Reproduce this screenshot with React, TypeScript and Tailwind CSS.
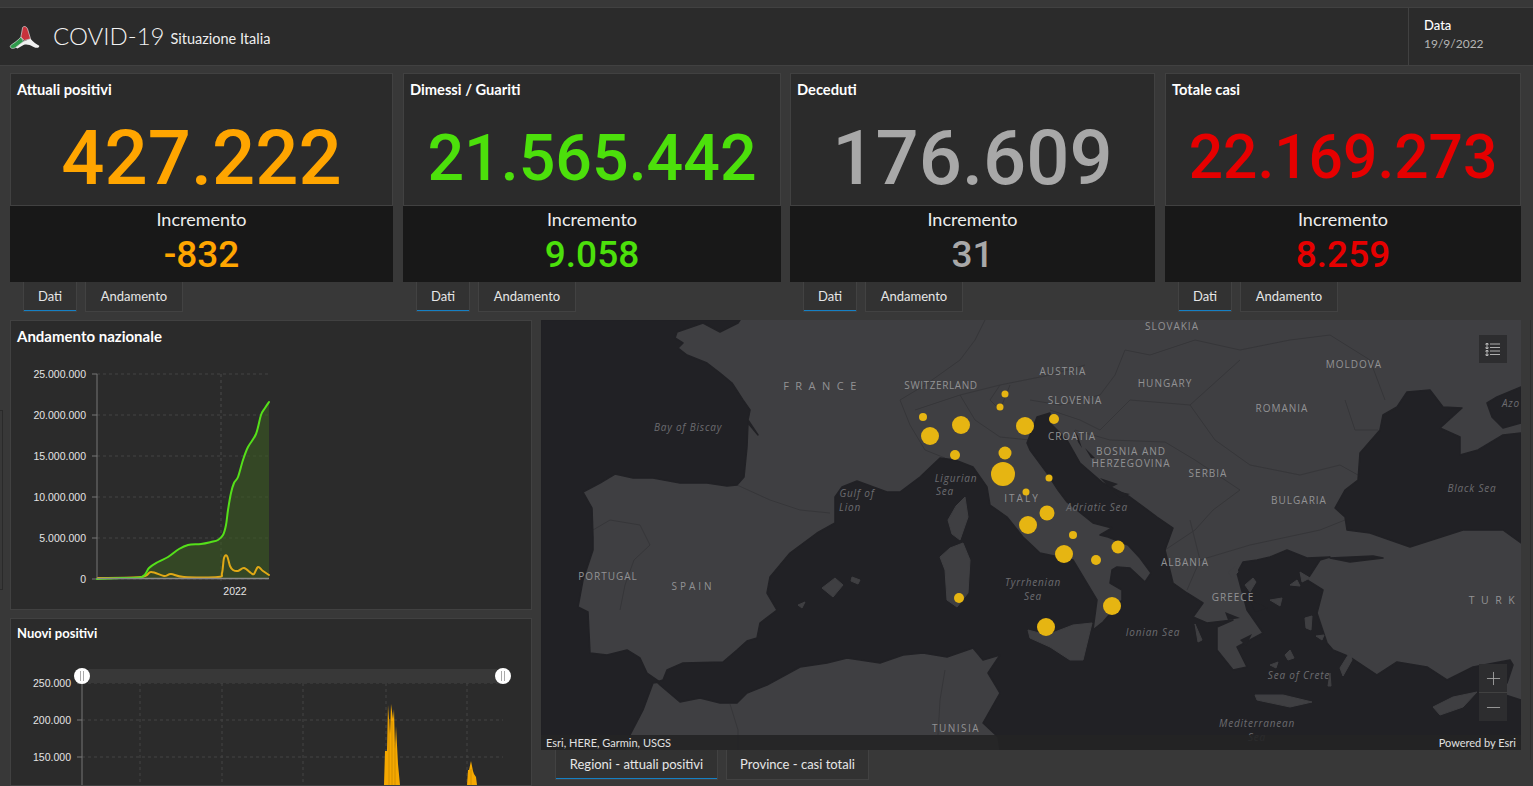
const sea = "541,320 740,320 738,323 720,332 703,323 677,332 675,338 683,343 678,348 687,355 707,363 720,373 732,383 743,400 750,410 748,420 758,435 748,423 747,447 744,477 737,485 727,486 707,483 680,483 653,478 633,478 615,474 600,483 583,492 592,508 593,537 593,550 583,580 578,607 588,612 590,653 607,655 627,650 640,658 647,673 660,682 653,683 643,710 630,735 625,750 541,750";

const med = "657,682 663,680 667,670 683,663 723,662 737,650 747,641 757,638 760,623 777,610 767,593 770,577 790,553 817,533 835,523 835,497 842,487 857,481 887,492 900,492 920,477 940,458 955,460 973,467 987,487 990,505 1007,517 1023,537 1040,553 1073,560 1085,580 1097,600 1093,630 1103,622 1122,600 1122,590 1110,583 1112,570 1117,567 1130,568 1145,582 1151,573 1140,558 1128,545 1108,537 1100,535 1112,528 1093,523 1067,502 1058,490 1047,473 1030,450 1027,443 1037,417 1050,413 1050,423 1067,440 1080,463 1103,483 1130,497 1157,517 1173,528 1165,550 1173,583 1187,593 1203,603 1193,617 1207,623 1233,620 1217,627 1217,650 1233,670 1247,667 1237,647 1263,633 1247,610 1237,573 1243,562 1257,560 1270,557 1287,550 1307,558 1330,557 1320,560 1307,580 1323,590 1317,613 1327,643 1333,650 1350,657 1377,675 1397,662 1427,667 1447,680 1473,667 1510,660 1513,665 1507,683 1490,690 1521,700 1521,750 1000,750 998,737 983,723 1000,693 988,673 1000,655 983,660 973,648 947,657 923,653 903,655 880,663 847,658 827,663 800,667 767,685 747,693 737,703 720,703 700,698 680,702 660,685";

const black = "1397,407 1407,392 1430,390 1443,407 1462,408 1440,428 1460,437 1460,455 1478,450 1503,435 1521,433 1521,543 1503,530 1463,530 1410,547 1370,533 1347,530 1345,517 1335,508 1345,490 1358,480 1360,453 1380,430 1383,415";

const islands = [
  "948,520 956,506 965,497 968,517 960,540 952,534",
  "940,557 950,548 963,543 970,560 968,593 957,607 947,600 945,570",
  "1028,630 1047,635 1073,625 1092,623 1083,660 1070,660 1050,647 1030,638",
  "822,588 835,578 843,585 833,597",
  "852,577 860,580 858,584 851,581",
  "798,605 805,602 802,608",
  "1255,695 1283,695 1312,702 1290,707 1257,700",
  "1433,707 1453,697 1477,692 1463,707 1440,715",
  "1340,668 1350,652 1352,660 1343,676",
  "1328,686 1330,673 1331,686",
  "1300,572 1310,578 1302,582",
  "1290,585 1297,580 1300,586",
  "1270,600 1282,598 1280,606",
  "1305,618 1312,616 1311,630 1306,628",
  "1316,636 1324,635 1322,640",
  "1285,655 1290,650 1294,658 1288,660",
  "1270,665 1278,662 1276,668",
  "1228,572 1236,566 1238,572 1232,578",
  "1195,624 1202,640 1198,642",
  "1245,585 1253,578 1256,582 1250,592",
];

const inlets = [
  "1074,430 1078,436 1082,448 1078,442",
  "1085,448 1095,458 1091,458",
  "1100,478 1118,484 1110,488",
  "1112,490 1130,494 1120,498",
  "1240,640 1252,634 1246,646",
  "1225,612 1240,618 1228,620",
  "1250,600 1268,608 1255,612",
];

const peninsula = [
  "1487,403 1497,397 1521,387 1521,423 1503,428 1492,417",
  "1330,558 1373,556 1383,558 1350,562",
];

const borders = [
  "M593 530 L610 520 L640 525 L650 545 L634 560 L625 585 L620 610",
  "M737 485 L770 500 L800 510 L830 513",
  "M730 704 L738 730 L738 750",
  "M945 670 L940 700 L938 735",
  "M900 400 L925 385 L960 360 L975 340 L985 320",
  "M900 400 L910 425 L925 450 L945 458",
  "M915 410 L960 395 L1000 385 L1050 375 L1085 365",
  "M960 395 L975 420 L1000 437 L1030 440",
  "M1000 385 L990 400 L1000 410 L1010 385",
  "M1030 400 L1060 405 L1100 395 L1115 375 L1125 350",
  "M1125 350 L1150 355 L1195 340 L1240 350 L1290 340 L1330 335 L1370 360 L1385 400",
  "M1050 410 L1080 420 L1100 430 L1130 400 L1190 405 L1240 360",
  "M1190 405 L1215 440 L1250 465 L1300 475 L1340 465 L1358 475",
  "M1075 430 L1110 440 L1165 442 L1195 460 L1240 490 L1213 510 L1195 530",
  "M1190 520 L1200 560 L1250 545 L1320 530 L1345 520",
  "M1195 530 L1165 550 M1200 560 L1187 590",
  "M1345 400 L1355 430 L1378 430",
];

const dots: [number, number, number][] = [
  [923, 417, 4], [930, 436, 9], [961, 425, 9], [955, 455, 5], [1000, 407, 3.5], [1005, 394, 3.5], [1025, 426, 9],
  [1054, 419, 5], [1005, 453, 6.5], [1003, 474, 12], [1026, 492, 3.5], [1049, 478, 3.5], [1047, 513, 7.5],
  [1028, 525, 9], [1073, 535, 4], [1064, 554, 9], [1118, 547, 6.5], [1096, 560, 5], [1112, 606, 9], [1046, 627, 9], [959, 598, 5],
];

const places: [string, number, number, number, number][] = [
  ["FRANCE", 823, 390, 6.5, 11], ["SWITZERLAND", 941, 389, 0.6, 10], ["AUSTRIA", 1063, 375, 1, 10], ["SLOVAKIA", 1172, 330, 1, 10],
  ["HUNGARY", 1165, 387, 1, 10], ["MOLDOVA", 1354, 368, 1, 10], ["ROMANIA", 1282, 412, 1, 10], ["SLOVENIA", 1075, 404, 1, 10],
  ["CROATIA", 1072, 440, 1, 10], ["BOSNIA AND", 1131, 455, 1, 10], ["HERZEGOVINA", 1131, 467, 1, 10], ["SERBIA", 1208, 477, 1, 10],
  ["BULGARIA", 1299, 504, 1, 10], ["ITALY", 1022, 502, 2, 10], ["PORTUGAL", 608, 580, 1, 10], ["SPAIN", 693, 590, 3, 10],
  ["ALBANIA", 1185, 566, 1, 10], ["GREECE", 1233, 601, 1, 10], ["TURK", 1495, 604, 6.5, 10.5], ["TUNISIA", 956, 732, 1.5, 10],
];

const seaNames: [string, number, number][] = [
  ["Bay of Biscay", 688, 431], ["Gulf of", 857, 497], ["Lion", 850, 511], ["Ligurian", 956, 482], ["Sea", 945, 495],
  ["Adriatic Sea", 1097, 511], ["Tyrrhenian", 1033, 586], ["Sea", 1033, 600], ["Ionian Sea", 1153, 636],
  ["Sea of Crete", 1299, 679], ["Mediterranean", 1257, 727], ["Sea", 1257, 741], ["Black Sea", 1472, 492], ["Azo", 1511, 407],
];

const yLabels: [string, number][] = [
  ["25.000.000", 374], ["20.000.000", 415], ["15.000.000", 456], ["10.000.000", 497], ["5.000.000", 538], ["0", 579],
];

const greenLine: [number, number][] = [
  [96, 579], [120, 578], [141, 577], [148, 568], [157, 562], [167, 557], [178, 549], [187, 545], [200, 544], [210, 542], [217, 540], [222, 535],
  [225, 525], [227, 510], [230, 493], [233, 483], [237, 477], [242, 460], [247, 447], [255, 434], [260, 415], [264, 408], [268, 402],
];

const orangeLine: [number, number][] = [
  [97, 578], [140, 577], [150, 572], [163, 576], [170, 574], [183, 577], [217, 577], [221, 573], [223, 558], [226, 556], [229, 566],
  [232, 570], [237, 571], [243, 568], [250, 573], [253, 574], [257, 567], [262, 571], [268, 575],
];

const spikesA = "383,786 384,752 386,752 387,706 389,735 390,705 392,720 393,710 394,750 395,727 397,765 399,786";
const spikesB = "466,786 467,771 468,771 470,762 472,772 473,775 475,778 476,786";

// catmull-rom, so the trend lines don't look like polygons
const smooth = (pts: [number, number][]) => {
  let d = `M${pts[0][0]} ${pts[0][1]}`;
  for (let i = 0; i < pts.length - 1; i++) {
    const p0 = pts[Math.max(i - 1, 0)];
    const p1 = pts[i];
    const p2 = pts[i + 1];
    const p3 = pts[Math.min(i + 2, pts.length - 1)];
    const c1x = p1[0] + (p2[0] - p0[0]) / 6;
    const c1y = p1[1] + (p2[1] - p0[1]) / 6;
    const c2x = p2[0] - (p3[0] - p1[0]) / 6;
    const c2y = p2[1] - (p3[1] - p1[1]) / 6;
    d += ` C${c1x} ${c1y} ${c2x} ${c2y} ${p2[0]} ${p2[1]}`;
  }
  return d;
};

const Logo = () => (
  <svg viewBox="0 0 40 36" className="ml-[6px] h-[32px] w-[35px]">
    <path d="M19 7 C21 5 24 6 25 10 L28 20 L21 22 L17 18 Z" fill="#c8323c" stroke="#ddd" strokeWidth="0.8" />
    <path d="M17 18 L20 23 L11 30 C8 32 4 31 5 28 C7 26 13 23 17 18 Z" fill="#2f9a4b" stroke="#ddd" strokeWidth="0.8" />
    <path d="M20 23 L28 20 C31 24 35 26 38 28 C38 31 35 31 31 29 C27 27 24 26 20 27 L13 31 L11 30 Z" fill="#f1f1f1" />
  </svg>
);

const TabBar = ({ tabs, wide }: { tabs: string[]; wide?: boolean }) => (
  <div className={`flex h-[30px] gap-2 ${wide ? "ml-[14px]" : "ml-[13px]"}`}>
    {tabs.map((t, i) => (
      <div
        key={t}
        className={`flex h-full items-center justify-center border border-t-0 border-[#424242] bg-[#323232] text-[13px] text-[#e6e6e6] ${
          i === 0 ? "shadow-[inset_0_-1px_0_#1580c4]" : ""
        } ${wide ? (i === 0 ? "w-[163px]" : "w-[143px]") : i === 0 ? "w-[54px]" : "w-[98px]"}`}
      >
        {t}
      </div>
    ))}
  </div>
);

interface StatCardProps {
  title: string;
  value: string;
  delta: string;
  color: string;
  width: string;
  size: string;
}

const StatCard = ({ title, value, delta, color, width, size }: StatCardProps) => (
  <div className={width}>
    <div className="h-[133px] border border-[#414141] bg-[#2b2b2b]">
      <div className="px-[6px] pt-[6px] text-[14.7px] font-bold leading-[18px] text-white">{title}</div>
      <div className={`mt-[12px] text-center font-[Roboto,sans-serif] font-medium leading-[96px] ${size} ${color}`}>{value}</div>
    </div>
    <div className="h-[76px] bg-[#181818] text-center">
      <div className="pt-[3px] text-[18px] leading-[21px] text-[#eeeeee]">Incremento</div>
      <div className={`pt-[3px] font-[Roboto,sans-serif] text-[37px] font-medium leading-[44px] ${color}`}>{delta}</div>
    </div>
    <TabBar tabs={["Dati", "Andamento"]} />
  </div>
);

const NationalChart = () => (
  <svg viewBox="10 345 522 258" className="block h-[258px] w-[522px]">
    {yLabels.map(([label, y]) => (
      <g key={label}>
        <line x1="96" x2="268" y1={y} y2={y} stroke="#444" strokeDasharray="3 3" />
        <line x1="91" x2="96" y1={y} y2={y} stroke="#777" />
        <text x="85" y={y + 4} textAnchor="end" fontSize="10.5" fill="#e4e4e4" fontFamily="Liberation Sans, sans-serif">
          {label}
        </text>
      </g>
    ))}
    <line x1="220" x2="220" y1="374" y2="584" stroke="#4a4a4a" strokeDasharray="3 3" />
    <line x1="96" x2="96" y1="374" y2="579" stroke="#777" />
    <path d={`${smooth(greenLine)} L268 579 L96 579 Z`} fill="#3a5a22" fillOpacity="0.6" />
    <path d={smooth(orangeLine)} fill="none" stroke="#e0a916" strokeWidth="2" strokeLinecap="round" />
    <path d={smooth(greenLine)} fill="none" stroke="#55e01a" strokeWidth="2" strokeLinecap="round" />
    <line x1="96" x2="268" y1="578.5" y2="578.5" stroke="#888" strokeWidth="1.5" />
    <text x="234" y="595" textAnchor="middle" fontSize="10.5" fill="#e4e4e4" fontFamily="Liberation Sans, sans-serif">
      2022
    </text>
  </svg>
);

const NewCasesChart = () => (
  <svg viewBox="10 643 522 143" className="block h-[143px] w-[522px]">
    {[139, 221, 302, 385, 466].map((x) => (
      <line key={x} x1={x} x2={x} y1="684" y2="786" stroke="#444" strokeDasharray="3 3" />
    ))}
    {(
      [
        ["250.000", 684],
        ["200.000", 721],
        ["150.000", 758],
      ] as [string, number][]
    ).map(([label, y]) => (
      <g key={label}>
        <line x1="81" x2="502" y1={y} y2={y} stroke="#444" strokeDasharray="3 3" />
        <line x1="76" x2="81" y1={y} y2={y} stroke="#777" />
        <text x="70" y={y + 4} textAnchor="end" fontSize="10.5" fill="#e4e4e4" fontFamily="Liberation Sans, sans-serif">
          {label}
        </text>
      </g>
    ))}
    <line x1="81" x2="81" y1="677" y2="786" stroke="#777" />
    <rect x="88" y="670" width="408" height="14" fill="#383838" />
    <polygon points={spikesA} fill="#f5a800" />
    <polygon points={spikesB} fill="#f5a800" />
    <path d="M388 786 L388 720 M391 786 L391 722 M394 786 L394 745 M470 786 L470 770" stroke="#c98a00" strokeWidth="0.8" />
    {[81, 502].map((x) => (
      <g key={x}>
        <circle cx={x} cy="677" r="8" fill="#fff" />
        <line x1={x - 1.5} x2={x - 1.5} y1="672" y2="682" stroke="#aaa" />
        <line x1={x + 1.5} x2={x + 1.5} y1="672" y2="682" stroke="#aaa" />
      </g>
    ))}
  </svg>
);

const MapDrawing = () => (
  <svg viewBox="541 320 980 430" className="block h-[430px] w-[980px] bg-[#3f3f42]">
    {borders.map((d) => (
      <path key={d} d={d} fill="none" stroke="#363639" strokeWidth="1" strokeLinejoin="round" />
    ))}
    <g fill="#212125" stroke="#212125" strokeWidth="1.5" strokeLinejoin="round">
      <polygon points={sea} />
      <polygon points={med} />
      <polygon points={black} />
      {peninsula.map((p) => (
        <polygon key={p} points={p} />
      ))}
    </g>
    <g fill="#3f3f42" stroke="#3f3f42" strokeWidth="1" strokeLinejoin="round">
      {islands.map((p) => (
        <polygon key={p} points={p} />
      ))}
    </g>
    {inlets.map((p) => (
      <polygon key={p} points={p} fill="#212125" />
    ))}
    {places.map(([name, x, y, sp, size]) => (
      <text key={name} x={x} y={y} textAnchor="middle" fontSize={size} letterSpacing={sp} fill="#929294" fontFamily="Open Sans, sans-serif">
        {name}
      </text>
    ))}
    {seaNames.map(([name, x, y]) => (
      <text key={name + x} x={x} y={y} textAnchor="middle" fontSize="10" letterSpacing="0.8" fontStyle="italic" fill="#6c6c70" fontFamily="Open Sans, sans-serif">
        {name}
      </text>
    ))}
    {dots.map(([x, y, r]) => (
      <circle key={`${x}-${y}`} cx={x} cy={y} r={r} fill="#e6b512" />
    ))}
  </svg>
);

const App = () => {
  return (
    <div className="relative h-[786px] w-[1533px] overflow-hidden bg-[#383838] font-[Lato,sans-serif] text-white">
      <div className="absolute left-0 top-[410px] h-[180px] w-[3px] border-y border-r border-[#2a2a2a]" />
      <div className="absolute right-0 top-[320px] h-[440px] w-[3px] border-l border-[#2f2f2f]" />

      <div className="pt-[7px]">
        <header className="flex h-[59px] items-center border-y border-[#414141] bg-[#2b2b2b]">
          <Logo />
          <div className="ml-[12px] -mt-[2px] text-[24px] font-light leading-none text-[#f2f2f2]">COVID-19</div>
          <div className="ml-[6px] mt-[4px] text-[14.5px] text-[#eeeeee]">Situazione Italia</div>
          <div className="ml-auto h-full w-[125px] border-l border-[#414141] pl-[15px] pt-[8px]">
            <div className="text-[13px] font-medium leading-[18px] text-white">Data</div>
            <div className="mt-[1px] text-[12px] leading-[18px] text-[#b5b5b5]">19/9/2022</div>
          </div>
        </header>
      </div>

      <div className="ml-[10px] mt-[7px] flex gap-[10px]">
        <StatCard title="Attuali positivi" value="427.222" delta="-832" color="text-[#ffa500]" width="w-[383px]" size="text-[76px]" />
        <StatCard title="Dimessi / Guariti" value="21.565.442" delta="9.058" color="text-[#4ce00b]" width="w-[378px]" size="text-[64.5px]" />
        <StatCard title="Deceduti" value="176.609" delta="31" color="text-[#a8a8a8]" width="-ml-px w-[365px]" size="text-[76px]" />
        <StatCard title="Totale casi" value="22.169.273" delta="8.259" color="text-[#e60000]" width="w-[356px]" size="text-[60.5px]" />
      </div>

      <div className="ml-[10px] mt-2 flex gap-[9px]">
        <div className="flex w-[522px] flex-col gap-[8px]">
          <section className="h-[290px] border border-[#414141] bg-[#2b2b2b]">
            <div className="px-[6px] pt-[6px] text-[15px] font-bold leading-[18px] text-white">Andamento nazionale</div>
            <NationalChart />
          </section>
          <section className="h-[168px] overflow-hidden border border-[#414141] bg-[#2b2b2b]">
            <div className="px-[6px] pt-[5px] text-[13px] font-bold leading-[18px] text-white">Nuovi positivi</div>
            <NewCasesChart />
          </section>
        </div>

        <div className="w-[980px]">
          <div className="relative h-[430px] w-[980px] overflow-hidden">
            <MapDrawing />
            <div className="absolute right-[14px] top-[15px] flex h-[28px] w-[28px] flex-col items-center justify-center bg-[#2d2d2f]">
              <svg viewBox="0 0 16 14" className="h-[14px] w-[16px]" stroke="#cfcfcf" fill="none">
                <path d="M5 2 H15 M5 5.5 H15 M5 9 H15 M5 12.5 H15" strokeWidth="0.8" />
                <path d="M1 1.5 h2 v1.5 h-2 Z M1 5 h2 v1.5 h-2 Z M1 8.5 h2 v1.5 h-2 Z M1 12 h2 v1.5 h-2 Z" strokeWidth="0.8" />
              </svg>
            </div>
            <div className="absolute right-[14px] top-[344px] w-[28px] bg-[#2d2d2f]">
              <div className="flex h-[29px] items-center justify-center border-b border-[#414141]">
                <svg viewBox="0 0 16 16" className="h-[15px] w-[15px]" stroke="#a8a8a8" strokeWidth="0.9">
                  <path d="M1 8 H15 M8 1 V15" />
                </svg>
              </div>
              <div className="flex h-[28px] items-center justify-center">
                <svg viewBox="0 0 16 16" className="h-[15px] w-[15px]" stroke="#a8a8a8" strokeWidth="0.9">
                  <path d="M1 8 H15" />
                </svg>
              </div>
            </div>
            <div className="absolute inset-x-0 bottom-0 flex justify-between bg-[#232325]/90 px-[5px] text-[11px] leading-[15px] text-[#e0e0e0]">
              <span>Esri, HERE, Garmin, USGS</span>
              <span>Powered by Esri</span>
            </div>
          </div>
          <TabBar tabs={["Regioni - attuali positivi", "Province - casi totali"]} wide />
        </div>
      </div>
    </div>
  );
};

export default App;
